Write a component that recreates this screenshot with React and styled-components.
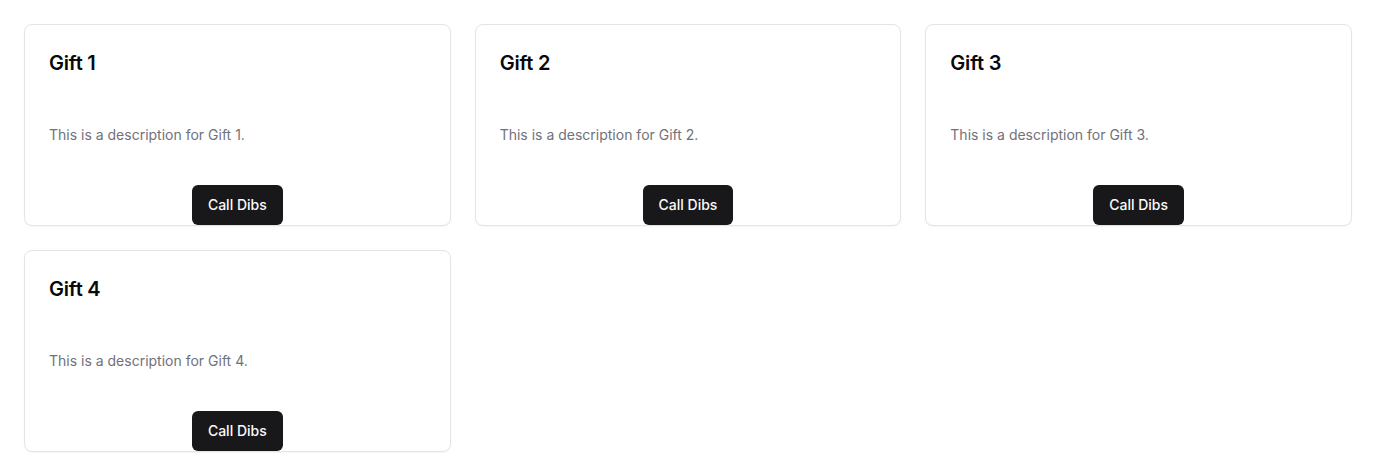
import React from 'react';
import styled, { createGlobalStyle } from 'styled-components';

const GlobalStyle = createGlobalStyle`
  body {
    margin: 0;
    background: #fff;
    font-family: Inter, "Noto Sans", sans-serif;
    color: #09090b;
  }
`;

const Grid = styled.div`
  display: grid;
  grid-template-columns: repeat(3, 1fr);
  gap: 24px;
  padding: 24px;
`;

const Card = styled.div`
  display: flex;
  flex-direction: column;
  height: 202px;
  box-sizing: border-box;
  border: 1px solid #e4e4e7;
  border-radius: 8px;
  background: #fff;
  box-shadow: 0 1px 2px rgba(0, 0, 0, 0.04);
  padding: 24px 24px 0;
`;

const Title = styled.h3`
  margin: 0;
  font-size: 20px;
  line-height: 28px;
  font-weight: 600;
  letter-spacing: -0.2px;
`;

const Description = styled.p`
  margin: 48px 0 0;
  font-size: 14px;
  line-height: 20px;
  color: #71717a;
`;

const Footer = styled.div`
  display: flex;
  justify-content: center;
  margin-top: auto;
`;

const Button = styled.button`
  height: 40px;
  padding: 0 16px 2px;
  border: none;
  border-radius: 6px;
  background: #18181b;
  color: #fafafa;
  font-family: inherit;
  font-size: 14px;
  font-weight: 500;
  cursor: pointer;
`;

const gifts = [1, 2, 3, 4].map((n) => ({
  name: `Gift ${n}`,
  description: `This is a description for Gift ${n}.`,
}));

function GiftCard({ name, description }) {
  return (
    <Card>
      <Title>{name}</Title>
      <Description>{description}</Description>
      <Footer>
        <Button>Call Dibs</Button>
      </Footer>
    </Card>
  );
}

export default function App() {
  return (
    <>
      <GlobalStyle />
      <Grid>
        {gifts.map((g) => (
          <GiftCard key={g.name} {...g} />
        ))}
      </Grid>
    </>
  );
}
